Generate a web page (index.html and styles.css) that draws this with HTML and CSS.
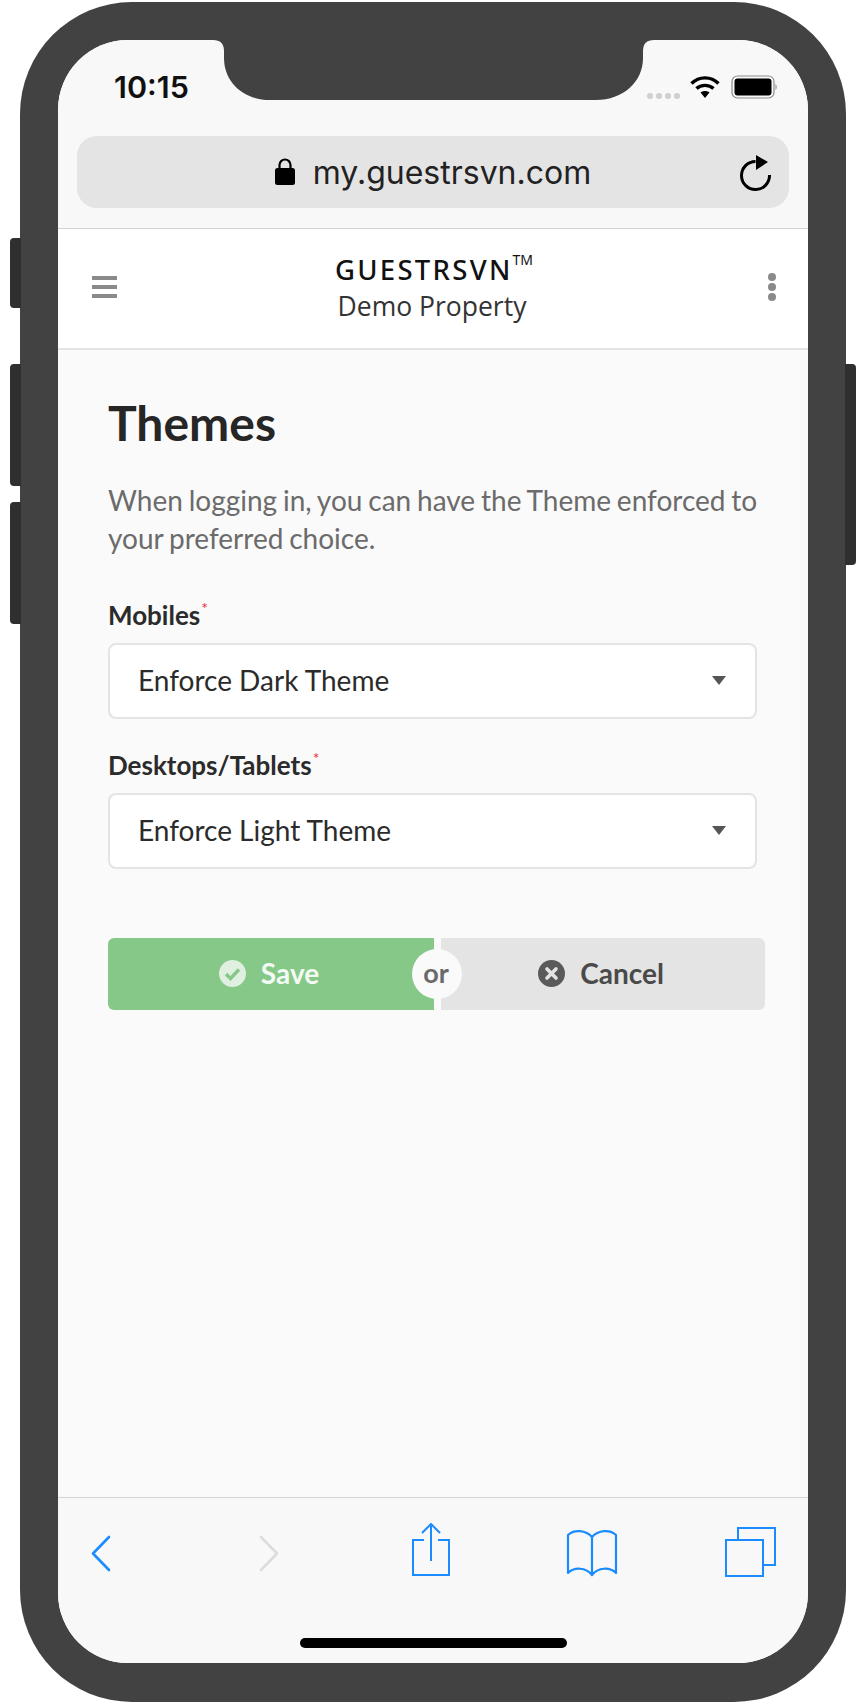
FILE: index.html
```html
<!DOCTYPE html>
<html lang="en">
<head>
  <meta charset="UTF-8" />
  <meta name="viewport" content="width=device-width, initial-scale=1.0" />
  <title>Themes</title>
  <link rel="stylesheet" href="styles.css">
</head>
<body>
  <div class="phone">
    <!-- side buttons -->
    <span class="side-btn mute"></span>
    <span class="side-btn vol-up"></span>
    <span class="side-btn vol-down"></span>
    <span class="side-btn power"></span>

    <div class="screen">
      <svg class="notch" width="441" height="61" viewBox="0 0 441 61">
        <path d="M0 0Q11 0 11 11V18C11 42 30 60 57 60H383C410 60 430 42 430 18V11Q430 0 441 0Z" fill="#424242"/>
      </svg>

      <div class="browser-top">
        <div class="status-bar">
          <span class="time">10:15</span>
          <div class="status-icons">
            <span class="signal"><i></i><i></i><i></i><i></i></span>
            <svg class="wifi" width="30" height="24" viewBox="0 0 30 24">
              <path d="M1.5 8.5C9 1 21 1 28.500 8.500" fill="none" stroke="#000" stroke-width="3.400"/>
              <path d="M6.500 13.500C11 9.300 19 9.300 23.500 13.500" fill="none" stroke="#000" stroke-width="3.400"/>
              <path d="M10.500 17.500C13 15.500 17 15.500 19.500 17.500L15 23Z" fill="#000"/>
            </svg>
            <svg width="46" height="24" viewBox="0 0 46 24">
              <rect x="1" y="1" width="42" height="22" rx="5.500" fill="none" stroke="#8c8c8c" stroke-width="1.200"/>
              <rect x="3.500" y="3.500" width="37" height="17" rx="3" fill="#000"/>
              <path d="M44.500 9C46 9.500 46 14.500 44.500 15Z" fill="#8c8c8c"/>
            </svg>
          </div>
        </div>
        <div class="url-bar">
          <svg class="lock" width="20" height="27" viewBox="0 0 20 27">
            <path d="M4.500 11V7a5.500 5.500 0 0 1 11 0v4" fill="none" stroke="#000" stroke-width="2.200"/>
            <rect x="0" y="10" width="20" height="17" rx="2.500" fill="#000"/>
          </svg>
          <span class="url">my.guestrsvn.com</span>
          <svg class="reload" width="34" height="38" viewBox="0 0 34 38">
            <path d="M17.500 8.500A14 14 0 1 0 31.500 22" fill="none" stroke="#000" stroke-width="3"/>
            <path d="M18 2L30 9L18 17Z" fill="#000"/>
          </svg>
        </div>
      </div>

      <header class="app-header">
        <div class="hamburger"><i></i><i></i><i></i></div>
        <div class="brand">
          <div class="brand-name">GUESTRSVN<sup>TM</sup></div>
          <div class="brand-sub">Demo Property</div>
        </div>
        <div class="dots"><i></i><i></i><i></i></div>
      </header>

      <main class="content">
        <h1>Themes</h1>
        <p class="intro">When logging in, you can have the Theme enforced to your preferred choice.</p>

        <label class="field-label">Mobiles<span class="req">*</span></label>
        <div class="select"><span>Enforce Dark Theme</span><i class="caret"></i></div>

        <label class="field-label">Desktops/Tablets<span class="req">*</span></label>
        <div class="select"><span>Enforce Light Theme</span><i class="caret"></i></div>

        <div class="btn-group">
          <button class="btn save">
            <svg width="27" height="27" viewBox="0 0 27 27">
              <circle cx="13.500" cy="13.500" r="13.500" fill="#dff0e0"/>
              <path d="M7 14l4.500 4.500L20 9.500" fill="none" stroke="#85c888" stroke-width="3.400"/>
            </svg>
            Save
          </button>
          <button class="btn cancel">
            <svg width="27" height="27" viewBox="0 0 27 27">
              <circle cx="13.500" cy="13.500" r="13.500" fill="#5a5a5a"/>
              <path d="M9 9l9 9M18 9l-9 9" fill="none" stroke="#e4e4e4" stroke-width="3.600" stroke-linecap="round"/>
            </svg>
            Cancel
          </button>
          <span class="or">or</span>
        </div>
      </main>

      <footer class="toolbar">
        <div class="tool-icons">
          <svg width="20" height="56" viewBox="0 0 20 56">
            <path d="M18 14L2 30.500L18 47" fill="none" stroke="#1a8cff" stroke-width="2.600" stroke-linecap="round" stroke-linejoin="round"/>
          </svg>
          <svg width="20" height="56" viewBox="0 0 20 56">
            <path d="M2 14L18 30.500L2 47" fill="none" stroke="#dcdcdc" stroke-width="2.600" stroke-linecap="round" stroke-linejoin="round"/>
          </svg>
          <svg width="38" height="56" viewBox="0 0 38 56">
            <path d="M12 17H1V52H37V17H26" fill="none" stroke="#1a8cff" stroke-width="2"/>
            <path d="M19 38V2M10 10L19 1L28 10" fill="none" stroke="#1a8cff" stroke-width="2"/>
          </svg>
          <svg width="52" height="56" viewBox="0 0 52 56">
            <path d="M26 14C20 7 8 6 2 12V50C8 44 20 44 26 52C32 44 44 44 50 50V12C44 6 32 7 26 14V50" fill="none" stroke="#1a8cff" stroke-width="2.200" stroke-linejoin="round"/>
          </svg>
          <svg width="52" height="56" viewBox="0 0 52 56">
            <path d="M13 16V5H50V42H39" fill="none" stroke="#1a8cff" stroke-width="2"/>
            <rect x="1" y="17" width="37" height="36" fill="none" stroke="#1a8cff" stroke-width="2"/>
          </svg>
        </div>
        <div class="home-indicator"></div>
      </footer>
    </div>
  </div>
</body>
</html>
```

FILE: styles.css
```css
* {
  margin: 0;
  padding: 0;
  box-sizing: border-box;
}

body {
  background: #fff;
  font-family: 'Lato', sans-serif;
  color: #262626;
}

.phone {
  position: relative;
  width: 826px;
  height: 1700px;
  margin: 2px 0 0 20px;
  padding: 38px;
  background: #424242;
  border-radius: 112px;
}

.side-btn {
  position: absolute;
  width: 11px;
  background: #2f2f2f;
  border-radius: 4px 0 0 4px;
}

.mute { left: -10px; top: 236px; height: 70px; }
.vol-up { left: -10px; top: 362px; height: 122px; }
.vol-down { left: -10px; top: 500px; height: 122px; }
.power { right: -10px; top: 362px; height: 201px; border-radius: 0 4px 4px 0; }

.screen {
  position: relative;
  display: flex;
  flex-direction: column;
  height: 1623px;
  background: #fafafa;
  border-radius: 70px;
  overflow: hidden;
}

.notch {
  position: absolute;
  top: 0;
  left: 155px;
}

/* browser chrome */
.browser-top {
  background: #f8f8f8;
  border-bottom: 1px solid #d4d4d4;
  padding-bottom: 20px;
}

.status-bar {
  display: flex;
  justify-content: space-between;
  align-items: center;
  height: 96px;
  padding: 0 31px 0 56px;
}

.time {
  font-family: 'Inter', sans-serif;
  font-size: 30.500px;
  font-weight: 600;
  color: #111;
  margin-top: -4px;
}

.status-icons {
  display: flex;
  align-items: center;
  gap: 10px;
  margin-top: -2px;
}

.wifi {
  margin-right: 1px;
}

.signal {
  display: flex;
  gap: 3px;
  margin-top: 17px;
}

.signal i {
  width: 6px;
  height: 6px;
  border-radius: 50%;
  background: #cfcfcf;
}

.url-bar {
  display: flex;
  align-items: center;
  justify-content: center;
  position: relative;
  height: 72px;
  margin: 0 19px;
  background: #e4e4e4;
  border-radius: 20px;
}

.lock {
  margin-right: 18px;
  margin-top: -2px;
}

.url {
  font-family: 'Inter', sans-serif;
  font-size: 32px;
  color: #222;
}

.reload {
  position: absolute;
  right: 17px;
  top: 17px;
}

/* app header */
.app-header {
  display: flex;
  align-items: center;
  justify-content: space-between;
  height: 121px;
  padding: 0 32px 1px 34px;
  background: #fff;
  border-bottom: 2px solid #e4e4e4;
}

.hamburger {
  display: flex;
  flex-direction: column;
  gap: 5px;
  width: 25px;
  margin-bottom: 2px;
}

.hamburger i {
  display: block;
  height: 4px;
  background: #8a8a8a;
}

.dots {
  display: flex;
  flex-direction: column;
  align-items: flex-end;
  gap: 2px;
  width: 25px;
  margin-bottom: 2px;
}

.dots i {
  display: block;
  width: 8px;
  height: 8px;
  border-radius: 50%;
  background: #8a8a8a;
}

.brand {
  padding-right: 4px;
  text-align: center;
  font-family: 'Open Sans', sans-serif;
}

.brand-name {
  font-family: 'Noto Sans', sans-serif;
  font-size: 27.500px;
  letter-spacing: 2.3px;
  line-height: 36px;
  color: #111;
  font-weight: 500;
  padding-left: 4px;
}

.brand-name sup {
  font-size: 14px;
  letter-spacing: 0;
  font-weight: 400;
  vertical-align: 15px;
  line-height: 0;
}

.brand-sub {
  font-size: 26.500px;
  line-height: 36px;
  color: #333;
}

/* form */
.content {
  flex: 1;
  padding: 44px 51px 0 50px;
  background: #fafafa;
}

h1 {
  font-size: 48px;
  font-weight: 700;
  line-height: 58px;
  color: #262626;
}

.intro {
  margin: 29px -8px 42px 0;
  font-size: 28px;
  word-spacing: -1.3px;
  line-height: 38px;
  color: #6b6b6b;
}

.field-label {
  display: block;
  margin-top: 30px;
  font-size: 26px;
  font-weight: 700;
  line-height: 32px;
  color: #2b2b2b;
}

.req {
  font-size: 16px;
  font-weight: 400;
  color: #e8303a;
  vertical-align: 11px;
  line-height: 0;
  margin-left: 1px;
}

.select {
  display: flex;
  align-items: center;
  justify-content: space-between;
  height: 76px;
  margin-top: 12px;
  padding: 0 29px 2px 28px;
  background: #fff;
  border: 2px solid #e4e4e4;
  border-radius: 8px;
  font-size: 28px;
  color: #2b2b2b;
}

.caret {
  width: 0;
  height: 0;
  border-left: 7px solid transparent;
  border-right: 7px solid transparent;
  border-top: 9px solid #555;
}

.btn-group {
  position: relative;
  display: flex;
  width: 657px;
  height: 72px;
  margin-top: 69px;
  gap: 7px;
}

.btn {
  display: flex;
  align-items: center;
  justify-content: center;
  gap: 15px;
  height: 72px;
  padding: 0 4px 2px 0;
  border: none;
  font-family: 'Lato', sans-serif;
  font-size: 28px;
  font-weight: 700;
}

.save {
  width: 326px;
  background: #85c888;
  color: #f4faf4;
  border-radius: 6px 0 0 6px;
}

.cancel {
  width: 324px;
  background: #e4e4e4;
  color: #4a4a4a;
  border-radius: 0 6px 6px 0;
}

.or {
  position: absolute;
  left: 304px;
  top: 11px;
  width: 50px;
  height: 50px;
  padding-right: 2px;
  border-radius: 50%;
  background: #fafafa;
  color: #6a6a6a;
  font-size: 27px;
  font-weight: 700;
  line-height: 48px;
  text-align: center;
}

/* bottom bar */
.toolbar {
  display: flex;
  flex-direction: column;
  height: 166px;
  padding-top: 25px;
  background: #f8f8f8;
  border-top: 1px solid #d4d4d4;
}

.tool-icons {
  display: grid;
  grid-template-columns: 168px 153px 154px 159px 52px;
  padding-left: 33px;
}

.home-indicator {
  align-self: center;
  width: 267px;
  height: 10px;
  margin-top: 59px;
  background: #000;
  border-radius: 5px;
}
```
